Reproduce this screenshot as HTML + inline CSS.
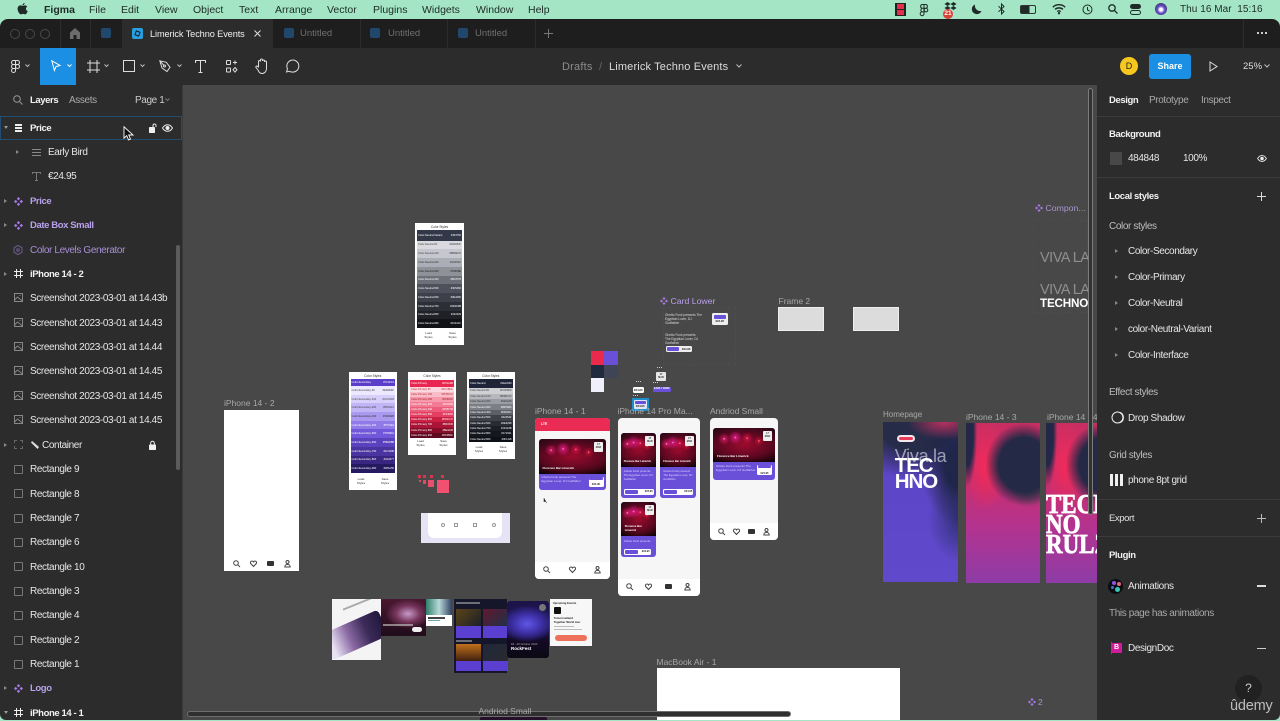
<!DOCTYPE html>
<html><head><meta charset="utf-8"><title>Figma</title>
<style>
*{box-sizing:border-box}
html,body{margin:0;padding:0;width:1280px;height:720px;overflow:hidden;background:#a3e5c4;font-family:"Liberation Sans",sans-serif}
.t{position:absolute;white-space:nowrap;line-height:14px;height:14px;font-size:10px;letter-spacing:-.38px;color:#e6e6e6;margin-top:1px}
.a{position:absolute}
svg.a{overflow:visible}
.m{color:#1f2b26;font-size:10.5px;top:2px;letter-spacing:0}
#win{position:absolute;left:0;top:0;width:1280px;height:720px;clip-path:inset(19px 0 0 0 round 8px 8px 6px 6px);background:#2c2c2c;filter:blur(.25px)}
.b{font-weight:bold;color:#f2f2f2;font-size:9.5px;letter-spacing:-.4px}
.p{color:#b9a0ec}
.g{color:#a9a9a9}
.tab{color:#6f6f6f;font-size:9.5px;letter-spacing:0}
.fi{position:absolute;width:10px;height:10px;background:#21486c;border-radius:2px;top:28px}
.box{position:absolute;left:14px;width:9px;height:9px;border:1px solid #777;border-radius:1px}
.sep{position:absolute;top:19px;width:1px;height:29px;background:#2c2c2c}
.div{position:absolute;left:1097px;width:183px;height:1px;background:#3c3c3c}
.arr{position:absolute;width:0;height:0;border-left:3px solid #888;border-top:2.5px solid transparent;border-bottom:2.5px solid transparent}
.lbl{color:#a8a8a8;font-size:8.5px;letter-spacing:0;margin-top:0}
.card{position:absolute;background:#fff}
.pal{position:absolute;display:flex;flex-direction:column}
.pal div{flex:1;display:flex;justify-content:space-between;align-items:center;font-size:2.6px;padding:0 1px;color:#fff;line-height:3px;overflow:hidden;white-space:nowrap}
.tt{position:absolute;left:0;right:0;text-align:center;font-size:3.2px;color:#333;white-space:nowrap}
.ls{position:absolute;font-size:3px;line-height:3.6px;color:#333;text-align:center;width:9px}
.ph{position:absolute;background:#f6f6f6;border-radius:4px;overflow:hidden}
.nav{position:absolute;left:0;right:0;bottom:0;background:#fff}
.ec{position:absolute;background:#6a4fd8;border-radius:3px;overflow:hidden}
.img{position:absolute;left:0;right:0;top:0;background:
radial-gradient(circle 1.2px at 18% 32%,#ffb0dc,transparent),
radial-gradient(circle 1.2px at 36% 28%,#ffa0e0,transparent),
radial-gradient(circle 1.2px at 55% 30%,#ff90b0,transparent),
radial-gradient(circle 1.2px at 74% 38%,#ff90a0,transparent),
radial-gradient(circle 6px at 18% 32%,rgba(240,30,120,.75),transparent),
radial-gradient(circle 7px at 36% 28%,rgba(240,30,150,.8),transparent),
radial-gradient(circle 6px at 55% 30%,rgba(240,20,80,.7),transparent),
radial-gradient(circle 5px at 74% 38%,rgba(240,20,60,.6),transparent),
radial-gradient(ellipse 75% 60% at 50% 50%,#9c0a2e 0,#5c0820 60%,transparent 100%),
linear-gradient(#2a0818,#1c0408 75%,#0c0206)}
.dt{position:absolute;background:#eee;border-radius:1px;width:7px;height:8px;font-size:2.4px;line-height:3px;color:#333;text-align:center;font-weight:bold;padding-top:1px}
.ttl{position:absolute;color:#fff;font-size:3px;font-weight:bold;white-space:nowrap}
.tx{position:absolute;color:#dcd6ff;font-size:3px;line-height:3.8px}
.pr{position:absolute;background:#fff;border-radius:1.5px;font-size:2.6px;font-weight:bold;color:#222;text-align:center}
.pr i{display:block;background:#6a4fd8;border-radius:1px;height:2.5px;margin:.7px}
.i{stroke:#444;fill:none;stroke-width:1}
</style></head><body>

<!-- menu bar -->
<svg class="a" style="left:17px;top:3px" width="11" height="12" viewBox="0 0 11 12"><path d="M7.6 0c.1 1-.8 2.3-2 2.3C5.500 1.200 6.500.1 7.600 0zM5.600 2.900c.6 0 1.300-.5 2.300-.5.900 0 1.800.4 2.300 1.200-1.900 1.100-1.500 3.700.5 4.500-.5 1.300-1.500 3.300-2.700 3.300-.8 0-1.100-.5-2-.5s-1.300.5-2 .5C2.500 11.400.6 8.200.6 5.900c0-2.300 1.500-3.500 2.800-3.500.9 0 1.600.5 2.200.5z" fill="#1f2b26"/></svg>
<div class="t m" style="left:44px;font-weight:bold">Figma</div>
<div class="t m" style="left:89px">File</div>
<div class="t m" style="left:121px">Edit</div>
<div class="t m" style="left:155px">View</div>
<div class="t m" style="left:193px">Object</div>
<div class="t m" style="left:239px">Text</div>
<div class="t m" style="left:275px">Arrange</div>
<div class="t m" style="left:327px">Vector</div>
<div class="t m" style="left:373px">Plugins</div>
<div class="t m" style="left:422px">Widgets</div>
<div class="t m" style="left:476px">Window</div>
<div class="t m" style="left:528px">Help</div>
<div class="a" style="left:895px;top:3px;width:11px;height:13px;background:#e0304a;border:1px solid #222;border-left-width:2px;border-right-width:2px"></div>
<div class="a" style="left:895px;top:9px;width:11px;height:1px;background:#222"></div>
<svg class="a" style="left:920px;top:4px" width="8" height="12" viewBox="0 0 8 12" fill="none" stroke="#1f2b26"><path d="M4 .5H2a2 2 0 000 3.800h2zM4 .5h2a2 2 0 010 3.800H4zM4 4.300H2a2 2 0 000 3.600h2zM6 4.300a1.800 1.800 0 100 3.600 1.800 1.800 0 000-3.600zM4 7.900H2a1.900 1.900 0 102 1.900z"/></svg>
<svg class="a" style="left:944px;top:2px" width="13" height="10" viewBox="0 0 13 10" fill="#1f2b26"><path d="M3.500 0L6.500 2 3.500 4 .5 2zM9.500 0l3 2-3 2-3-2zM3.500 4l3 2-3 2-3-2zM9.500 4l3 2-3 2-3-2z"/></svg>
<div class="a" style="left:943px;top:9px;width:10px;height:10px;border-radius:5px;background:#d8413a;color:#fff;font-size:6.5px;line-height:10px;text-align:center;font-weight:bold">21</div>
<svg class="a" style="left:971px;top:4px" width="11" height="11" viewBox="0 0 11 11"><path d="M4 .5A5 5 0 1010.500 7 5.500 5.500 0 014 .5z" fill="#1f2b26"/></svg>
<svg class="a" style="left:998px;top:3px" width="7" height="12" viewBox="0 0 7 12" fill="none" stroke="#1f2b26"><path d="M.5 3.200L6 8.500 3.500 11V1L6 3.500.5 8.800"/></svg>
<div class="a" style="left:1020px;top:5px;width:16px;height:9px;border:1px solid #333;border-radius:2px;background:linear-gradient(90deg,#1f2b26 60%,transparent 60%)"></div>
<svg class="a" style="left:1052px;top:4px" width="14" height="10" viewBox="0 0 14 10" fill="none" stroke="#1f2b26" stroke-width="1.400"><path d="M.8 3.200a9 9 0 0112.400 0M3 5.400a6 6 0 018 0M5.200 7.500a3 3 0 013.600 0"/><circle cx="7" cy="9.200" r=".5"/></svg>
<svg class="a" style="left:1082px;top:4px" width="11" height="11" viewBox="0 0 11 11" fill="none" stroke="#1f2b26"><circle cx="5.500" cy="5.500" r="4.500"/><path d="M5.500 3v3l2 1"/></svg>
<svg class="a" style="left:1108px;top:4px" width="10" height="10" viewBox="0 0 10 10" fill="none" stroke="#1f2b26" stroke-width="1.300"><circle cx="4" cy="4" r="3.200"/><path d="M6.400 6.400L9.500 9.500"/></svg>
<div class="a" style="left:1130px;top:4px;width:11px;height:5px;border-radius:3px;background:#1f2b26"></div>
<div class="a" style="left:1130px;top:10px;width:11px;height:5px;border-radius:3px;border:1px solid #1f2b26"></div>
<div class="a" style="left:1155px;top:3px;width:12px;height:12px;border-radius:6px;background:radial-gradient(circle at 50% 55%,#fff 0 15%,#6a50c8 40%,#33306a 80%)"></div>
<div class="t m" style="left:1180px;letter-spacing:.05px;font-size:10px">Thu 16 Mar&nbsp; 15:16</div>

<div id="win">
<!-- tab bar -->
<div class="a" style="left:0;top:19px;width:1280px;height:29px;background:#1e1e1e"></div>
<div class="a" style="left:122px;top:19px;width:151px;height:29px;background:#2c2c2c"></div>
<div class="a" style="left:9.500px;top:28.500px;width:10px;height:10px;border:1px solid #4a4a4a;border-radius:5px"></div>
<div class="a" style="left:24.500px;top:28.500px;width:10px;height:10px;border:1px solid #4a4a4a;border-radius:5px"></div>
<div class="a" style="left:40px;top:28.500px;width:10px;height:10px;border:1px solid #4a4a4a;border-radius:5px"></div>
<div class="sep" style="left:60px"></div><div class="sep" style="left:90px"></div><div class="sep" style="left:360px"></div><div class="sep" style="left:447px"></div><div class="sep" style="left:535px"></div><div class="sep" style="left:1243px"></div>
<svg class="a" style="left:70px;top:28px" width="10" height="11" viewBox="0 0 10 11"><path d="M5 0L0 4.500V11h3.500V7h3v4H10V4.500z" fill="#6c6c6c"/></svg>
<div class="fi" style="left:101px"></div>
<div class="fi" style="left:132px;width:11px;height:11px;background:#2a9fe0"></div>
<div class="a" style="left:135px;top:31px;width:5px;height:5px;border:1px solid #123;transform:rotate(20deg)"></div>
<div class="t" style="left:150px;top:26px;font-size:9.200px;color:#f0f0f0;letter-spacing:-.1px">Limerick Techno Events</div>
<svg class="a" style="left:254px;top:30px" width="7" height="7" viewBox="0 0 7 7" stroke="#ddd"><path d="M.5.500l6 6M6.500.500l-6 6"/></svg>
<div class="fi" style="left:284px"></div><div class="t tab" style="left:300px;top:26px">Untitled</div>
<div class="fi" style="left:370px"></div><div class="t tab" style="left:388px;top:26px">Untitled</div>
<div class="fi" style="left:458px"></div><div class="t tab" style="left:475px;top:26px">Untitled</div>
<svg class="a" style="left:544px;top:29px" width="9" height="9" viewBox="0 0 9 9" stroke="#777"><path d="M4.500 0v9M0 4.500h9"/></svg>
<div class="a" style="left:1257px;top:32px;width:2px;height:2px;background:#ccc;box-shadow:4px 0 #ccc,8px 0 #ccc"></div>

<!-- toolbar -->
<div class="a" style="left:0;top:48px;width:1280px;height:37px;background:#2c2c2c"></div>
<div class="a" style="left:40px;top:48px;width:36px;height:37px;background:#1a8fe3"></div>
<svg class="a" style="left:11px;top:60px" width="9" height="13" viewBox="0 0 9 13" fill="none" stroke="#ddd"><path d="M4.500.5H2.500a2 2 0 000 4h2zM4.500.5h2a2 2 0 010 4h-2zM4.500 4.500h-2a2 2 0 000 4h2zM6.500 4.500a2 2 0 100 4 2 2 0 000-4zM4.500 8.500h-2a2 2 0 102 2z"/></svg>
<svg class="a" style="left:25px;top:64px" width="5" height="4" fill="none" stroke="#bbb"><path d="M.5.500L2.500 2.500 4.500.5"/></svg>
<svg class="a" style="left:51px;top:60px" width="10" height="12" viewBox="0 0 10 12" fill="none" stroke="#fff"><path d="M.8.800L9 5.500 5 6.600 3.400 10.500z"/></svg>
<svg class="a" style="left:67px;top:64px" width="5" height="4" fill="none" stroke="#fff"><path d="M.5.500L2.500 2.500 4.500.5"/></svg>
<svg class="a" style="left:87px;top:60px" width="13" height="13" viewBox="0 0 13 13" fill="none" stroke="#ddd"><path d="M3 0v13M10 0v13M0 3h13M0 10h13"/></svg>
<svg class="a" style="left:104px;top:64px" width="5" height="4" fill="none" stroke="#bbb"><path d="M.5.500L2.500 2.500 4.500.5"/></svg>
<div class="a" style="left:123px;top:60px;width:12px;height:12px;border:1px solid #ddd"></div>
<svg class="a" style="left:140px;top:64px" width="5" height="4" fill="none" stroke="#bbb"><path d="M.5.500L2.500 2.500 4.500.5"/></svg>
<svg class="a" style="left:159px;top:60px" width="12" height="13" viewBox="0 0 12 13" fill="none" stroke="#ddd"><path d="M.8.800l6.500 1.500 3.700 5-3 4.200-5-3.500zM.8.800l4 4.500"/><circle cx="5.500" cy="6" r="1"/></svg>
<svg class="a" style="left:177px;top:64px" width="5" height="4" fill="none" stroke="#bbb"><path d="M.5.500L2.500 2.500 4.500.5"/></svg>
<svg class="a" style="left:195px;top:60px" width="11" height="13" viewBox="0 0 11 13" fill="none" stroke="#ddd"><path d="M.5 3V.5h10V3M5.500.5v12M3.500 12.500h4"/></svg>
<svg class="a" style="left:226px;top:60px" width="12" height="13" viewBox="0 0 12 13" fill="none" stroke="#ddd"><rect x=".5" y=".5" width="4" height="4" rx=".5"/><path d="M9 .5v4M7 2.500h4"/><rect x=".5" y="8" width="4" height="4" rx=".5"/><path d="M9 7.500l2 2.300-2 2.300-2-2.300z"/></svg>
<svg class="a" style="left:255px;top:58px" width="14" height="16" viewBox="0 0 14 16" fill="none" stroke="#ddd"><path d="M3.500 9V3.500a1 1 0 012 0V2a1 1 0 012 0v1a1 1 0 012 0v1a1 1 0 012 0v6.500c0 3-2 5-4.500 5S4 14 3 12L1 9.500c-.7-1 .8-2 1.500-1z"/></svg>
<svg class="a" style="left:285px;top:59px" width="14" height="14" viewBox="0 0 14 14" fill="none" stroke="#ddd"><path d="M1.500 13l1-3.200A6 6 0 117 13c-1 0-2-.3-2.500-.7z"/></svg>
<div class="t" style="left:562px;top:59px;font-size:11px;color:#8c8c8c;letter-spacing:.2px">Drafts</div>
<div class="t" style="left:599px;top:59px;font-size:11px;color:#666">/</div>
<div class="t" style="left:609px;top:59px;font-size:11px;color:#dcdcdc;letter-spacing:.15px">Limerick Techno Events</div>
<svg class="a" style="left:736px;top:64px" width="6" height="4" fill="none" stroke="#bbb"><path d="M.5.500L3 3 5.500.5"/></svg>
<div class="a" style="left:1120px;top:57px;width:18px;height:18px;border-radius:9px;background:#f6c81e;color:#222;font-size:9px;line-height:18px;text-align:center">D</div>
<div class="a" style="left:1149px;top:54px;width:42px;height:25px;border-radius:3px;background:#1a8fe3;color:#fff;font-size:9px;line-height:25px;text-align:center;font-weight:bold">Share</div>
<svg class="a" style="left:1209px;top:61px" width="9" height="11" viewBox="0 0 9 11" fill="none" stroke="#ddd"><path d="M1 1l7 4.500L1 10z"/></svg>
<div class="t" style="left:1243px;top:59px;font-size:9.500px;color:#ddd;letter-spacing:0">25%</div>
<svg class="a" style="left:1264px;top:64px" width="6" height="4" fill="none" stroke="#bbb"><path d="M.5.500L3 3 5.500.5"/></svg>

<!-- canvas -->
<div class="a" style="left:183px;top:85px;width:914px;height:635px;background:#484848;overflow:hidden">
</div>

<!-- left panel -->
<div class="a" style="left:0;top:85px;width:183px;height:635px;background:#2c2c2c"></div>
<div class="a" style="left:182px;top:85px;width:1px;height:635px;background:#3a3a3a"></div>
<svg class="a" style="left:13px;top:95px" width="10" height="10" viewBox="0 0 10 10" fill="none" stroke="#999"><circle cx="4" cy="4" r="3.300"/><path d="M6.500 6.500L9.500 9.500"/></svg>
<div class="t b" style="left:30px;top:93px">Layers</div>
<div class="t g" style="left:69px;top:93px">Assets</div>
<div class="t" style="left:135px;top:93px;color:#ccc">Page 1</div>
<svg class="a" style="left:165px;top:98px" width="5" height="4" fill="none" stroke="#777"><path d="M.5.500L2.500 2.500 4.500.5"/></svg>
<div class="a" style="left:0;top:116px;width:182px;height:24px;border:1px solid #214e72"></div>
<div class="a" style="left:176px;top:245px;width:4px;height:225px;background:#5c5c5c;border-radius:2px"></div>

<div class="arr" style="left:4px;top:126px;border-left:2.500px solid transparent;border-right:2.500px solid transparent;border-top:3px solid #999;border-bottom:0"></div>
<div class="a" style="left:15px;top:124px;width:7px;height:2px;background:#eee;box-shadow:0 3px #eee,0 6px #eee"></div>
<div class="t b" style="left:30px;top:121px">Price</div>
<svg class="a" style="left:149px;top:123px" width="8" height="10" viewBox="0 0 8 10"><rect y="4" width="6" height="6" rx=".8" fill="#eee"/><path d="M4 4V2.500a1.500 1.500 0 013 0V4" fill="none" stroke="#eee"/></svg>
<svg class="a" style="left:162px;top:124px" width="11" height="8" viewBox="0 0 11 8" fill="none" stroke="#eee"><path d="M.5 4C2 1.500 3.500.7 5.500.7S9 1.500 10.500 4C9 6.500 7.500 7.300 5.500 7.300S2 6.500.5 4z"/><circle cx="5.500" cy="4" r="1.500" fill="#eee"/></svg>

<div class="arr" style="left:16px;top:150px"></div>
<div class="a" style="left:32px;top:149px;width:9px;height:1px;background:#888;box-shadow:-0px 3px #888,0 6px #888"></div>
<div class="t" style="left:48px;top:145px">Early Bird</div>
<svg class="a" style="left:32px;top:172px" width="9" height="9" viewBox="0 0 9 9" fill="none" stroke="#777"><path d="M.5 2V.5h8V2M4.500.5v8M3 8.500h3"/></svg>
<div class="t" style="left:48px;top:169px">€24.95</div>

<div class="arr" style="left:4px;top:199px"></div>
<svg class="a" style="left:14px;top:197px" width="9" height="9" viewBox="0 0 9 9" fill="#a779ea"><path d="M4.500 0l1.700 1.700-1.700 1.700-1.700-1.700zM1.700 2.800l1.700 1.700-1.700 1.700L0 4.500zM7.300 2.800L9 4.500 7.300 6.200 5.600 4.500zM4.500 5.600l1.700 1.700L4.500 9 2.800 7.300z"/></svg>
<div class="t b p" style="left:30px;top:194px">Price</div>
<div class="arr" style="left:4px;top:223px"></div>
<svg class="a" style="left:14px;top:221px" width="9" height="9" viewBox="0 0 9 9" fill="#a779ea"><path d="M4.500 0l1.700 1.700-1.700 1.700-1.700-1.700zM1.700 2.800l1.700 1.700-1.700 1.700L0 4.500zM7.300 2.800L9 4.500 7.300 6.200 5.600 4.500zM4.500 5.600l1.700 1.700L4.500 9 2.800 7.300z"/></svg>
<div class="t b p" style="left:30px;top:218px">Date Box Small</div>
<svg class="a" style="left:13px;top:245px" width="10" height="10" viewBox="0 0 10 10" fill="none" stroke="#6e5c8e"><path d="M5 .5l4 2.200v4.600L5 9.500 1 7.300V2.700z"/><circle cx="5" cy="5" r="1.300"/></svg>
<div class="t p" style="left:30px;top:243px;color:#a98fd8">Color Levels Generator</div>
<div class="arr" style="left:4px;top:272px"></div>
<svg class="a" style="left:14px;top:269px" width="9" height="9" viewBox="0 0 9 9" fill="none" stroke="#eee"><path d="M2.500 0v9M6.500 0v9M0 2.500h9M0 6.500h9"/></svg>
<div class="t b" style="left:30px;top:267px">iPhone 14 - 2</div>

<svg class="a" style="left:14px;top:293px" width="9" height="9" viewBox="0 0 9 9" fill="none" stroke="#888"><rect x=".5" y=".5" width="8" height="8"/><path d="M.5 7l3-3 5 4M5.500 2.500h1"/></svg>
<div class="t" style="left:30px;top:291px">Screenshot 2023-03-01 at 14.43b</div>
<svg class="a" style="left:14px;top:318px" width="9" height="9" viewBox="0 0 9 9" fill="none" stroke="#888"><rect x=".5" y=".5" width="8" height="8"/><path d="M.5 7l3-3 5 4M5.500 2.500h1"/></svg>
<div class="t" style="left:30px;top:316px">Screenshot 2023-03-01 at 14.43</div>
<svg class="a" style="left:14px;top:342px" width="9" height="9" viewBox="0 0 9 9" fill="none" stroke="#888"><rect x=".5" y=".5" width="8" height="8"/><path d="M.5 7l3-3 5 4M5.500 2.500h1"/></svg>
<div class="t" style="left:30px;top:340px">Screenshot 2023-03-01 at 14.44</div>
<svg class="a" style="left:14px;top:366px" width="9" height="9" viewBox="0 0 9 9" fill="none" stroke="#888"><rect x=".5" y=".5" width="8" height="8"/><path d="M.5 7l3-3 5 4M5.500 2.500h1"/></svg>
<div class="t" style="left:30px;top:364px">Screenshot 2023-03-01 at 14.45</div>
<svg class="a" style="left:14px;top:391px" width="9" height="9" viewBox="0 0 9 9" fill="none" stroke="#888"><rect x=".5" y=".5" width="8" height="8"/><path d="M.5 7l3-3 5 4M5.500 2.500h1"/></svg>
<div class="t" style="left:30px;top:389px">Screenshot 2023-03-01 at 14.45</div>
<svg class="a" style="left:14px;top:415px" width="9" height="9" viewBox="0 0 9 9" fill="none" stroke="#888"><rect x=".5" y=".5" width="8" height="8"/><path d="M.5 7l3-3 5 4M5.500 2.500h1"/></svg>
<div class="t" style="left:30px;top:413px">Screenshot 2023-03-01 at 14.45</div>

<div class="arr" style="left:4px;top:443px"></div>
<div class="a" style="left:14px;top:440px;width:9px;height:9px;border:1px dashed #666"></div>
<svg class="a" style="left:31px;top:441px" width="8" height="8" viewBox="0 0 8 8"><path d="M1 0l7 6-1.500 2L0 1.500z" fill="#dedede"/></svg>
<div class="t" style="left:42px;top:438px">Container</div>
<svg class="a" style="left:149px;top:441px" width="7" height="9" viewBox="0 0 7 9"><rect y="3.500" width="7" height="5.500" rx=".8" fill="#f0f0f0"/><path d="M1.700 3.500V2a1.800 1.800 0 013.600 0v1.500" fill="none" stroke="#f0f0f0"/></svg>

<div class="box" style="top:465px"></div><div class="t" style="left:30px;top:462px">Rectangle 9</div>
<div class="box" style="top:489px"></div><div class="t" style="left:30px;top:487px">Rectangle 8</div>
<div class="box" style="top:514px"></div><div class="t" style="left:30px;top:511px">Rectangle 7</div>
<div class="box" style="top:538px"></div><div class="t" style="left:30px;top:535px">Rectangle 6</div>
<div class="box" style="top:562px"></div><div class="t" style="left:30px;top:560px">Rectangle 10</div>
<div class="box" style="top:587px"></div><div class="t" style="left:30px;top:584px">Rectangle 3</div>
<div class="box" style="top:611px"></div><div class="t" style="left:30px;top:608px">Rectangle 4</div>
<div class="box" style="top:636px"></div><div class="t" style="left:30px;top:633px">Rectangle 2</div>
<div class="box" style="top:660px"></div><div class="t" style="left:30px;top:657px">Rectangle 1</div>
<div class="arr" style="left:4px;top:686px"></div>
<svg class="a" style="left:14px;top:684px" width="9" height="9" viewBox="0 0 9 9" fill="#a779ea"><path d="M4.500 0l1.700 1.700-1.700 1.700-1.700-1.700zM1.700 2.800l1.700 1.700-1.700 1.700L0 4.500zM7.300 2.800L9 4.500 7.300 6.200 5.600 4.500zM4.500 5.600l1.700 1.700L4.500 9 2.800 7.300z"/></svg>
<div class="t b p" style="left:30px;top:681px">Logo</div>
<div class="arr" style="left:4px;top:711px;border-left:2.500px solid transparent;border-right:2.500px solid transparent;border-top:3px solid #999;border-bottom:0"></div>
<svg class="a" style="left:14px;top:708px" width="9" height="9" viewBox="0 0 9 9" fill="none" stroke="#eee"><path d="M2.500 0v9M6.500 0v9M0 2.500h9M0 6.500h9"/></svg>
<div class="t b" style="left:30px;top:706px">iPhone 14 - 1</div>

<!-- cursor -->
<svg class="a" style="left:123px;top:126px" width="11" height="15" viewBox="0 0 11 15"><path d="M1 .8v11.400l2.700-2.500 1.800 4.200 2-.8-1.800-4.100H10z" fill="#111" stroke="#fff" stroke-width=".9"/></svg>

<!-- canvas contents -->
<div class="t lbl" style="left:224px;top:396px">iPhone 14 - 2</div>
<div class="a" style="left:224px;top:410px;width:75px;height:161px;background:#fff"></div>
<svg class="a i" style="left:233px;top:560px" width="7" height="7" viewBox="0 0 7 7"><circle cx="3" cy="3" r="2.300"/><path d="M4.700 4.700L7 7"/></svg>
<svg class="a i" style="left:250px;top:560px" width="7" height="7" viewBox="0 0 7 7"><path d="M3.500 6.500L.6 3.400C-.4 1.500 2.400 0 3.500 2 4.600 0 7.400 1.500 6.400 3.400z"/></svg>
<div class="a" style="left:267px;top:561px;width:7px;height:5px;background:#333;border-radius:1px"></div>
<svg class="a i" style="left:284px;top:560px" width="7" height="7" viewBox="0 0 7 7"><circle cx="3.500" cy="2" r="1.500"/><path d="M.8 7c0-3.500 5.400-3.500 5.400 0z"/></svg>

<!-- top color card -->
<div class="card" style="left:415px;top:223px;width:49px;height:122px">
<div class="tt" style="top:2px">Color Styles</div>
<div class="pal" style="left:2px;top:7px;width:45px;height:98px">
<div style="background:#333848;flex:1.2"><span>Color-Neutral-Variant</span><span>#404752</span></div>
<div style="background:#d9d9df;color:#444"><span>Color-Neutral-50</span><span>#D4D9DF</span></div>
<div style="background:#c6c7ce;color:#444"><span>Color-Neutral-100</span><span>#BBBEC5</span></div>
<div style="background:#acaeb7;color:#333"><span>Color-Neutral-200</span><span>#A0A5AF</span></div>
<div style="background:#8f9199;color:#222"><span>Color-Neutral-300</span><span>#7E828E</span></div>
<div style="background:#6e7079"><span>Color-Neutral-400</span><span>#6D7078</span></div>
<div style="background:#4e515c"><span>Color-Neutral-500</span><span>#4F5460</span></div>
<div style="background:#3d404b"><span>Color-Neutral-600</span><span>#3E4250</span></div>
<div style="background:#2c2f38"><span>Color-Neutral-700</span><span>#2D303B</span></div>
<div style="background:#1f2127"><span>Color-Neutral-800</span><span>#222329</span></div>
<div style="background:#121317"><span>Color-Neutral-900</span><span>#161A1F</span></div>
</div>
<div class="ls" style="left:9px;top:109px">Load Styles</div><div class="ls" style="left:33px;top:109px">Save Styles</div>
</div>

<!-- purple color card -->
<div class="card" style="left:348.500px;top:372px;width:48.500px;height:118px">
<div class="tt" style="top:1.500px">Color Styles</div>
<div class="pal" style="left:2px;top:7px;width:44.500px;height:94px">
<div style="background:#5a3ec9;flex:.8"><span>Color-Secondary</span><span>#7C4FF4</span></div>
<div style="background:#ece8fd;color:#444"><span>Color-Secondary-50</span><span>#EFEBFF</span></div>
<div style="background:#d8d0fb;color:#444"><span>Color-Secondary-100</span><span>#CCC0F8</span></div>
<div style="background:#c1b5f5;color:#444"><span>Color-Secondary-200</span><span>#B5A9F1</span></div>
<div style="background:#a999ef;color:#333"><span>Color-Secondary-300</span><span>#9D90EB</span></div>
<div style="background:#8f7ae7"><span>Color-Secondary-400</span><span>#8770E4</span></div>
<div style="background:#7158da"><span>Color-Secondary-500</span><span>#7050DA</span></div>
<div style="background:#5a42bf"><span>Color-Secondary-600</span><span>#5B3DB8</span></div>
<div style="background:#4a349f"><span>Color-Secondary-700</span><span>#4C3498</span></div>
<div style="background:#382680"><span>Color-Secondary-800</span><span>#3A2677</span></div>
<div style="background:#251a60"><span>Color-Secondary-900</span><span>#281A50</span></div>
</div>
<div class="ls" style="left:8px;top:106px">Load Styles</div><div class="ls" style="left:32px;top:106px">Save Styles</div>
</div>

<!-- red color card -->
<div class="card" style="left:408px;top:372px;width:48px;height:83px">
<div class="tt" style="top:1.500px">Color Styles</div>
<div class="pal" style="left:2px;top:8px;width:44px;height:57.700px">
<div style="background:#e8264f;flex:1.3"><span>Color-Primary</span><span>#F51A4B</span></div>
<div style="background:#fcd7df;color:#a33"><span>Color-Primary 50</span><span>#FFCBCF</span></div>
<div style="background:#f9bcc8;color:#a33"><span>Color-Primary 100</span><span>#FFBCC2</span></div>
<div style="background:#f79aad;color:#922"><span>Color-Primary 200</span><span>#FF9FAF</span></div>
<div style="background:#f27a93"><span>Color-Primary 300</span><span>#FF8299</span></div>
<div style="background:#ec5c7a"><span>Color-Primary 400</span><span>#F55F7B</span></div>
<div style="background:#e33f62"><span>Color-Primary 500</span><span>#F44060</span></div>
<div style="background:#cc1f44"><span>Color-Primary 600</span><span>#D61C47</span></div>
<div style="background:#aa1537"><span>Color-Primary 700</span><span>#B01536</span></div>
<div style="background:#870e2b"><span>Color-Primary 800</span><span>#8E1028</span></div>
<div style="background:#5f0a1e"><span>Color-Primary 900</span><span>#6C0B1F</span></div>
</div>
<div class="ls" style="left:8px;top:68px">Load Styles</div><div class="ls" style="left:31px;top:68px">Save Styles</div>
</div>

<!-- neutral color card -->
<div class="card" style="left:466.500px;top:372px;width:48.500px;height:86.500px">
<div class="tt" style="top:1.500px">Color Styles</div>
<div class="pal" style="left:2.500px;top:7px;width:43.500px;height:63px">
<div style="background:#1f2438;flex:1.700"><span>Color-Neutral</span><span>#1E2A3D</span></div>
<div style="background:#cfd0d4;color:#444"><span>Color-Neutral 50</span><span>#D3D6D8</span></div>
<div style="background:#b6b8bd;color:#444"><span>Color-Neutral 100</span><span>#B9BCC2</span></div>
<div style="background:#9a9da3;color:#333"><span>Color-Neutral 200</span><span>#9FA2A8</span></div>
<div style="background:#7d7f86"><span>Color-Neutral 300</span><span>#807E8A</span></div>
<div style="background:#5e6068"><span>Color-Neutral 400</span><span>#60646C</span></div>
<div style="background:#3f4149"><span>Color-Neutral 500</span><span>#42464F</span></div>
<div style="background:#2a2c35"><span>Color-Neutral 600</span><span>#2E3038</span></div>
<div style="background:#1d1f28"><span>Color-Neutral 700</span><span>#1F222B</span></div>
<div style="background:#15171f"><span>Color-Neutral 800</span><span>#171921</span></div>
<div style="background:#0e1017"><span>Color-Neutral 900</span><span>#0F1118</span></div>
</div>
<div class="ls" style="left:8px;top:74px">Load Styles</div><div class="ls" style="left:32px;top:74px">Save Styles</div>
</div>

<!-- red squares -->
<div class="a" style="left:418px;top:475px;width:2.500px;height:2.500px;background:#d8354f"></div>
<div class="a" style="left:423px;top:475px;width:2.500px;height:2.500px;background:#d8354f"></div>
<div class="a" style="left:429.500px;top:475px;width:3px;height:2.500px;background:#d8354f"></div>
<div class="a" style="left:441px;top:475px;width:3px;height:2.500px;background:#d8354f"></div>
<div class="a" style="left:418.500px;top:480px;width:2px;height:2px;background:#e04a64"></div>
<div class="a" style="left:422.500px;top:480px;width:3.500px;height:3.500px;background:#e04a64"></div>
<div class="a" style="left:428px;top:480px;width:6px;height:6.500px;background:#e84f6c"></div>
<div class="a" style="left:436.500px;top:480px;width:12.500px;height:12.500px;background:#f25070"></div>

<!-- nav component -->
<div class="a" style="left:421px;top:513px;width:89px;height:30px;background:#e6e3f5;overflow:hidden">
<div class="a" style="left:7px;top:-6px;width:74px;height:31px;background:#fff;border-radius:6px"></div>
<div class="a" style="left:19.500px;top:10px;width:4px;height:4px;border:.7px solid #999;border-radius:2px"></div>
<div class="a" style="left:33px;top:10px;width:4px;height:4px;border:.7px solid #999"></div>
<div class="a" style="left:52px;top:10px;width:4px;height:4px;border:.7px solid #999"></div>
<div class="a" style="left:71px;top:10px;width:4px;height:4px;border:.7px solid #999;border-radius:2px"></div>
</div>

<!-- swatches -->
<div class="a" style="left:590.500px;top:351px;width:13.500px;height:13.500px;background:#e92a4d"></div>
<div class="a" style="left:604px;top:351px;width:13.500px;height:13.500px;background:#6a4fd8"></div>
<div class="a" style="left:590.500px;top:364.500px;width:13.500px;height:13.500px;background:#202a3e"></div>
<div class="a" style="left:604px;top:364.500px;width:13.500px;height:13.500px;background:#3f4556"></div>
<div class="a" style="left:590.500px;top:378px;width:13.500px;height:13.500px;background:#f0f0fa"></div>

<!-- small comps -->
<div class="a" style="left:656px;top:371.500px;width:10px;height:9.500px;background:#e6e6e6;border-radius:1px;font-size:2.500px;line-height:3px;text-align:center;color:#333;padding-top:1.500px;font-weight:bold">17<br>MAR</div>
<div class="a" style="left:652.500px;top:387px;width:18.500px;height:4.700px;background:#6a4fd8;border-radius:1px;font-size:2.600px;line-height:4.700px;text-align:center;color:#fff;font-weight:bold">EARLY BIRD</div>
<div class="a" style="left:632.500px;top:386.500px;width:11.500px;height:6px;background:#fff;border-radius:1.500px;font-size:2.800px;line-height:6px;text-align:center;color:#222;font-weight:bold">€24.95</div>
<div class="a" style="left:632px;top:397.500px;width:16.500px;height:13px;background:#1d8fc9"></div>
<div class="a" style="left:634px;top:399.500px;width:12.500px;height:9px;background:#dfe6f5;border-radius:1px;font-size:2.800px;text-align:center;color:#222;font-weight:bold;line-height:13px"><div class="a" style="left:1px;top:1px;width:10.500px;height:3px;background:#6a4fd8;border-radius:1px"></div>€24.95</div>
<div class="a" style="left:636px;top:381px;width:1px;height:1px;background:#ccc;box-shadow:2px 0 #ccc,4px 0 #ccc"></div>
<div class="a" style="left:657px;top:367px;width:1px;height:1px;background:#ccc;box-shadow:2px 0 #ccc,4px 0 #ccc"></div>
<div class="a" style="left:653px;top:382px;width:1px;height:1px;background:#ccc;box-shadow:2px 0 #ccc,4px 0 #ccc"></div>
<div class="a" style="left:633px;top:395px;width:1px;height:1px;background:#ccc;box-shadow:2px 0 #ccc,4px 0 #ccc"></div>

<!-- Card Lower -->
<svg class="a" style="left:660px;top:297px" width="8" height="8" viewBox="0 0 9 9" fill="#a779ea"><path d="M4.500 0l1.700 1.700-1.700 1.700-1.700-1.700zM1.700 2.800l1.700 1.700-1.700 1.700L0 4.500zM7.300 2.800L9 4.500 7.300 6.200 5.600 4.500zM4.500 5.600l1.700 1.700L4.500 9 2.800 7.300z"/></svg>
<div class="t" style="left:670.500px;top:293px;font-size:8.700px;color:#b9a0ec;letter-spacing:0">Card Lower</div>
<div class="a" style="left:662.500px;top:307px;width:73px;height:58px;border:1px dashed #55506a;opacity:.4"></div>
<div class="a" style="left:665px;top:313px;width:40px;font-size:3.200px;line-height:4px;color:#ddd">Ghetto Funk presents The Egyptian Lover, DJ Godfather</div>
<div class="a" style="left:712px;top:313px;width:15.500px;height:11.500px;background:#eee;border-radius:1.500px;font-size:2.800px;font-weight:bold;color:#222;text-align:center;padding-top:5.500px"><div class="a" style="left:1.500px;top:1.500px;width:12.500px;height:4px;background:#6a4fd8;border-radius:1px"></div>€24.95</div>
<div class="a" style="left:665px;top:333px;width:36px;font-size:3.200px;line-height:4px;color:#ddd">Ghetto Funk presents The Egyptian Lover, DJ Godfather</div>
<div class="a" style="left:665.500px;top:346px;width:26px;height:6px;background:#eee;border-radius:1.500px;font-size:2.800px;font-weight:bold;color:#222;text-align:right;line-height:6px;padding-right:1px"><div class="a" style="left:1px;top:1px;width:12px;height:4px;background:#6a4fd8;border-radius:1px"></div>€24.95</div>

<div class="t lbl" style="left:778.500px;top:294px">Frame 2</div>
<div class="a" style="left:778px;top:307px;width:46px;height:24px;background:#dcdcdc;border:1px solid #eee"></div>
<div class="a" style="left:852.500px;top:307px;width:46px;height:24px;background:#dcdcdc;border:1px solid #eee"></div>

<!-- Phones -->
<div class="t lbl" style="left:535px;top:404px">iPhone 14 - 1</div>
<div class="ph" style="left:535px;top:418px;width:74.500px;height:160.500px">
<div class="a" style="left:0;top:0;width:100%;height:12.500px;background:#ea2c54;color:#fff;font-size:3.500px;line-height:12.500px;padding-left:6px;font-weight:bold">LTE</div>
<div class="nav" style="height:17px"></div>
</div>
<div class="ec" style="left:538.500px;top:439px;width:67.500px;height:51px">
<div class="img" style="height:34.500px"></div>
<div class="dt" style="right:3px;top:3px;left:auto;width:9px;height:9.500px">17<br>MAR</div>
<div class="ttl" style="left:4px;top:27px">Florence Bar Limerick</div>
<div class="tx" style="left:3px;top:37px;width:44px">Ghetto Funk presents The Egyptian Lover, DJ Godfather</div>
<div class="pr" style="left:50px;top:37.500px;width:15px;height:10.500px;line-height:3px"><i></i><br>€24.95</div>
</div>
<svg class="a i" style="left:543px;top:566px" width="7" height="7" viewBox="0 0 7 7"><circle cx="3" cy="3" r="2.300"/><path d="M4.700 4.700L7 7"/></svg>
<svg class="a i" style="left:569px;top:566px" width="7" height="7" viewBox="0 0 7 7"><path d="M3.500 6.500L.6 3.400C-.4 1.500 2.400 0 3.500 2 4.600 0 7.400 1.500 6.400 3.400z"/></svg>
<svg class="a i" style="left:594px;top:566px" width="7" height="7" viewBox="0 0 7 7"><circle cx="3.500" cy="2" r="1.500"/><path d="M.8 7c0-3.500 5.400-3.500 5.400 0z"/></svg>
<svg class="a" style="left:544px;top:498px" width="4" height="5" viewBox="0 0 4 5"><path d="M0 0v4l1-1 2 2" fill="#222" stroke="#222" stroke-width=".5"/></svg>

<div class="t lbl" style="left:617.500px;top:404px;color:#a8a8a8">iPhone 14 Pro Ma...</div>
<div class="ph" style="left:617.500px;top:418px;width:82px;height:177.500px"><div class="nav" style="height:17px"></div></div>
<div class="ec" style="left:620.700px;top:433.300px;width:35.700px;height:65px">
<div class="img" style="height:33.500px"></div><div class="dt" style="right:2px;top:3px;left:auto;width:9px;height:9.500px">17<br>MAR</div>
<div class="ttl" style="left:3px;top:27px;font-size:2.600px">Florence Bar Limerick</div>
<div class="tx" style="left:3px;top:37px;width:30px;font-size:2.800px">Ghetto Funk presents The Egyptian Lover, DJ Godfather</div>
<div class="pr" style="left:3px;top:56px;width:30px;height:6px;line-height:6px;text-align:right;padding-right:1px"><div class="a" style="left:1px;top:1px;width:13px;height:4px;background:#6a4fd8;border-radius:1px"></div>€24.95</div>
</div>
<div class="ec" style="left:660.300px;top:433.300px;width:35.700px;height:65px">
<div class="img" style="height:33.500px"></div><div class="dt" style="right:2px;top:3px;left:auto;width:9px;height:9.500px">17<br>MAR</div>
<div class="ttl" style="left:3px;top:27px;font-size:2.600px">Florence Bar Limerick</div>
<div class="tx" style="left:3px;top:37px;width:30px;font-size:2.800px">Ghetto Funk presents The Egyptian Lover, DJ Godfather</div>
<div class="pr" style="left:3px;top:56px;width:30px;height:6px;line-height:6px;text-align:right;padding-right:1px"><div class="a" style="left:1px;top:1px;width:13px;height:4px;background:#6a4fd8;border-radius:1px"></div>€24.95</div>
</div>
<div class="ec" style="left:620.700px;top:502.300px;width:35.700px;height:55px">
<div class="img" style="height:34px"></div><div class="dt" style="right:2px;top:3px;left:auto;width:9px;height:9.500px">17<br>MAR</div>
<div class="ttl" style="left:4px;top:22px;font-size:2.800px;line-height:4px">Florence Bar<br>Limerick</div>
<div class="tx" style="left:3px;top:38px;width:30px;font-size:2.800px">Ghetto Funk presents</div>
<div class="pr" style="left:3px;top:46.500px;width:27px;height:6px;line-height:6px;text-align:right;padding-right:1px"><div class="a" style="left:1px;top:1px;width:13px;height:4px;background:#6a4fd8;border-radius:1px"></div>€24.95</div>
</div>
<svg class="a i" style="left:626px;top:583px" width="7" height="7" viewBox="0 0 7 7"><circle cx="3" cy="3" r="2.300"/><path d="M4.700 4.700L7 7"/></svg>
<svg class="a i" style="left:645px;top:583px" width="7" height="7" viewBox="0 0 7 7"><path d="M3.500 6.500L.6 3.400C-.4 1.500 2.400 0 3.500 2 4.600 0 7.400 1.500 6.400 3.400z"/></svg>
<div class="a" style="left:665px;top:584px;width:7px;height:5px;background:#333;border-radius:1px"></div>
<svg class="a i" style="left:684px;top:583px" width="7" height="7" viewBox="0 0 7 7"><circle cx="3.500" cy="2" r="1.500"/><path d="M.8 7c0-3.500 5.400-3.500 5.400 0z"/></svg>

<div class="t lbl" style="left:710px;top:404px">Andriod Small</div>
<div class="ph" style="left:709.700px;top:418px;width:68.600px;height:121.700px"><div class="nav" style="height:17px"></div></div>
<div class="ec" style="left:713px;top:428.300px;width:62px;height:51.700px">
<div class="img" style="height:34px"></div><div class="dt" style="right:3px;top:3px;left:auto;width:9px;height:9.500px">17<br>MAR</div>
<div class="ttl" style="left:4px;top:26px">Florence Bar Limerick</div>
<div class="tx" style="left:3px;top:37px;width:40px">Ghetto Funk presents The Egyptian Lover, DJ Godfather</div>
<div class="pr" style="left:44px;top:36.500px;width:15px;height:10.500px;line-height:3px"><i></i><br>€24.95</div>
</div>
<svg class="a i" style="left:718px;top:528px" width="7" height="7" viewBox="0 0 7 7"><circle cx="3" cy="3" r="2.300"/><path d="M4.700 4.700L7 7"/></svg>
<svg class="a i" style="left:733px;top:528px" width="7" height="7" viewBox="0 0 7 7"><path d="M3.500 6.500L.6 3.400C-.4 1.500 2.400 0 3.500 2 4.600 0 7.400 1.500 6.400 3.400z"/></svg>
<div class="a" style="left:748px;top:529px;width:7px;height:5px;background:#333;border-radius:1px"></div>
<svg class="a i" style="left:763px;top:528px" width="7" height="7" viewBox="0 0 7 7"><circle cx="3.500" cy="2" r="1.500"/><path d="M.8 7c0-3.500 5.400-3.500 5.400 0z"/></svg>

<!-- Homepage / gradients -->
<div class="t lbl" style="left:883px;top:408px;font-size:8px;letter-spacing:0">Homepage</div>
<div class="a" style="left:883.300px;top:421.700px;width:74.400px;height:160px;overflow:hidden;background:
radial-gradient(ellipse 50% 11% at 82% 0,#b8305f 0,transparent 100%),
radial-gradient(ellipse 50% 36% at 100% 28%,#20264a 0 35%,transparent 100%),
radial-gradient(ellipse 100% 36% at 45% 0,#262b48 0 50%,transparent 100%),
radial-gradient(ellipse 45% 28% at 105% 60%,#2d2e6e 0,transparent 100%),
linear-gradient(#5c44c8,#6049ca)">
<div class="a" style="left:14px;top:13px;width:18px;height:7px;background:#e93a5c;border:2px solid #f4e8ec;border-radius:4px"></div>
<div class="t" style="left:11.500px;top:23px;font-size:18px;line-height:20px;height:20px;color:rgba(255,255,255,.55);letter-spacing:-.3px">Viva la</div>
<div class="a" style="left:11.500px;top:36.500px;font-size:20.500px;line-height:15.500px;font-weight:bold;color:#fff;letter-spacing:-1.100px">TEC<br>HNO</div>
</div>
<div class="t lbl" style="left:966px;top:410px">iPhone 14 - 3</div>
<div class="a" style="left:965.700px;top:422.700px;width:74.300px;height:160.600px;background:
radial-gradient(ellipse 52% 26% at 78% 26%,#242945 0 65%,transparent 100%),
radial-gradient(ellipse 28% 13% at 88% 40%,#45454c 0,transparent 100%),
radial-gradient(ellipse 13% 34% at 2% 6%,#232848 0 60%,transparent 100%),
radial-gradient(ellipse 30% 28% at 27% 27%,#f42a58 0,transparent 100%),
linear-gradient(#c92e62 0,#c62f72 40%,#b3338f 65%,#8e3ca8 100%)"></div>
<div class="t lbl" style="left:1047px;top:410px">iPhone 14 - 4</div>
<div class="a" style="left:1046.300px;top:422.700px;width:51px;height:160.600px;overflow:hidden">
<div class="a" style="left:0;top:0;width:74.300px;height:160.600px;background:
radial-gradient(ellipse 52% 26% at 78% 26%,#242945 0 65%,transparent 100%),
radial-gradient(ellipse 13% 34% at 2% 6%,#232848 0 60%,transparent 100%),
radial-gradient(ellipse 30% 28% at 27% 27%,#f42a58 0,transparent 100%),
linear-gradient(#c92e62 0,#c62f72 40%,#b3338f 65%,#8e3ca8 100%)"></div>
<div class="a" style="left:0;top:71px;font-family:'Liberation Serif',serif;font-weight:bold;font-size:27px;line-height:20px;color:#fff;transform:scaleX(.85);transform-origin:0 0;-webkit-text-stroke:.8px #fff;white-space:nowrap">TECH<br>NO<br>RULZ</div>
</div>

<!-- Component panel top right -->
<svg class="a" style="left:1035px;top:204px" width="8" height="8" viewBox="0 0 9 9" fill="#a779ea"><path d="M4.500 0l1.700 1.700-1.700 1.700-1.700-1.700zM1.700 2.800l1.700 1.700-1.700 1.700L0 4.500zM7.300 2.800L9 4.500 7.300 6.200 5.600 4.500zM4.500 5.600l1.700 1.700L4.500 9 2.800 7.300z"/></svg>
<div class="t" style="left:1045.500px;top:200px;font-size:8.700px;color:#a996d0;letter-spacing:0">Compon...</div>
<div class="a" style="left:1033px;top:220px;width:55px;height:93px;border:1px dashed #524e62;opacity:.4"></div>
<div class="a" style="left:1040px;top:240px;width:49px;height:75px;overflow:hidden">
<div class="t" style="left:0;top:9px;font-size:14.500px;line-height:16px;height:16px;color:#8f8f8f;letter-spacing:-.5px">VIVA LA</div>
<div class="t" style="left:0;top:41px;font-size:14.500px;line-height:16px;height:16px;color:#8f8f8f;letter-spacing:-.5px">VIVA LA</div>
<div class="t" style="left:0;top:55.500px;font-size:11.700px;line-height:14px;color:#fff;font-weight:bold;letter-spacing:-.2px">TECHNO</div>
</div>

<!-- screens row -->
<div class="a" style="left:332.300px;top:599.300px;width:48.700px;height:60.700px;background:#f4f4f4;overflow:hidden">
<div class="a" style="left:-8px;top:22px;width:62px;height:28px;background:linear-gradient(90deg,#e9e3f3 10%,#8b6aa4 40%,#3c2b5a 70%,#21183a);border-radius:4px;transform:rotate(-24deg)"></div>
<div class="a" style="left:10px;top:4px;width:30px;height:2px;background:#aaa;transform:rotate(-22deg)"></div>
</div>
<div class="a" style="left:381px;top:599.300px;width:44.700px;height:36.700px;background:radial-gradient(ellipse 50% 40% at 60% 40%,#c79ac8,#75345a 55%,transparent 100%),linear-gradient(#4a1830,#1f0c1a)">
<div class="a" style="left:2px;top:25px;width:30px;height:2px;background:#ccc;opacity:.6"></div>
<div class="a" style="left:31px;top:28px;width:10px;height:5px;background:#eee;border-radius:3px"></div>
</div>
<div class="a" style="left:425.700px;top:599.300px;width:26.300px;height:26.400px;background:#fff;overflow:hidden">
<div class="a" style="left:0;top:0;width:100%;height:16px;background:linear-gradient(90deg,#2d7f6a,#b8d8d8 50%,#304060)"></div>
<div class="a" style="left:2px;top:18px;width:17px;height:1.500px;background:#444"></div>
<div class="a" style="left:2px;top:21px;width:12px;height:1px;background:#6aa"></div>
</div>
<div class="a" style="left:452.700px;top:599.300px;width:54.300px;height:74px;background:#15162a;border-left:1px solid #4a4a70">
<div class="a" style="left:2px;top:10px;width:25px;height:17px;background:linear-gradient(135deg,#5a4418,#1d2026)"></div>
<div class="a" style="left:29px;top:10px;width:25px;height:17px;background:linear-gradient(135deg,#601830,#203048)"></div>
<div class="a" style="left:2px;top:27px;width:25px;height:12px;background:#5b3fd0"></div>
<div class="a" style="left:29px;top:27px;width:25px;height:12px;background:#5b3fd0"></div>
<div class="a" style="left:2px;top:45px;width:25px;height:17px;background:linear-gradient(#c2701a,#402010)"></div>
<div class="a" style="left:29px;top:45px;width:25px;height:17px;background:linear-gradient(135deg,#20283a,#2a2a30)"></div>
<div class="a" style="left:2px;top:62px;width:25px;height:10px;background:#5b3fd0"></div>
<div class="a" style="left:29px;top:62px;width:25px;height:10px;background:#5b3fd0"></div>
<div class="a" style="left:2px;top:3px;width:24px;height:1.500px;background:#aaa;opacity:.6"></div>
<div class="a" style="left:2px;top:41px;width:16px;height:1.500px;background:#aaa;opacity:.6"></div>
</div>
<div class="a" style="left:507px;top:600.500px;width:41.500px;height:57px;border-radius:3px;background:radial-gradient(ellipse 65% 32% at 48% 40%,#5e57e8 0,#3c2da0 55%,transparent 100%),linear-gradient(#1b1346,#1f1a5c 45%,#120a24 70%,#0c0914)">
<div class="a" style="left:32px;top:3px;width:7px;height:7px;border-radius:4px;background:#777"></div>
<div class="t" style="left:4px;top:40px;font-size:2.800px;color:#aaa;line-height:4px;height:4px;letter-spacing:0">18 - 20 October 2023</div>
<div class="t" style="left:4px;top:44px;font-size:4.500px;color:#fff;font-weight:bold;line-height:6px;height:6px;letter-spacing:0">RockFest</div>
</div>
<div class="a" style="left:549.700px;top:599.300px;width:42px;height:46.400px;background:#f7f7f7;overflow:hidden">
<div class="t" style="left:3px;top:.5px;font-size:2.800px;color:#222;line-height:4px;height:4px;font-weight:bold;letter-spacing:0">Upcoming Events</div>
<div class="a" style="left:4px;top:8px;width:7px;height:7px;background:#111;border-radius:1px"></div>
<div class="a" style="left:4px;top:18px;width:30px;font-size:2.800px;line-height:3.500px;color:#222;font-weight:bold">Tomorrowland Together World tour</div>
<div class="a" style="left:4px;top:27px;width:20px;height:1px;background:#bbb"></div>
<div class="a" style="left:4px;top:30px;width:28px;height:1px;background:#bbb"></div>
<div class="a" style="left:5px;top:36px;width:32px;height:5.500px;border-radius:3px;background:#ee6f5a"></div>
</div>

<!-- macbook -->
<div class="t lbl" style="left:656.500px;top:655px">MacBook Air - 1</div>
<div class="a" style="left:656.500px;top:668px;width:243.500px;height:52px;background:#fff"></div>

<div class="a" style="left:480px;top:716px;width:67px;height:4px;background:#26102c;border-radius:3px 3px 0 0"></div>

<!-- scrollbars -->
<div class="a" style="left:187px;top:711px;width:604px;height:6px;background:#2f2f2f;border:1px solid #6e6e6e;border-radius:3px"></div>
<div class="a" style="left:1087.500px;top:88px;width:5px;height:427px;border:1px solid #7c7c7c;border-radius:3px;background:#323232"></div>
<div class="t lbl" style="left:478.500px;top:704px">Andriod Small</div>
<svg class="a" style="left:1028px;top:698px" width="8" height="8" viewBox="0 0 9 9" fill="#a779ea"><path d="M4.500 0l1.700 1.700-1.700 1.700-1.700-1.700zM1.700 2.800l1.700 1.700-1.700 1.700L0 4.500zM7.300 2.800L9 4.500 7.300 6.200 5.600 4.500zM4.500 5.600l1.700 1.700L4.500 9 2.800 7.300z"/></svg>
<div class="t" style="left:1038px;top:694px;font-size:8.500px;color:#a996d0;letter-spacing:0">2</div>

<!-- right panel -->
<div class="a" style="left:1097px;top:85px;width:183px;height:635px;background:#2c2c2c"></div>
<div class="t b" style="left:1109px;top:93px">Design</div>
<div class="t g" style="left:1149px;top:93px">Prototype</div>
<div class="t g" style="left:1201px;top:93px">Inspect</div>
<div class="div" style="top:116px"></div>
<div class="t b" style="left:1109px;top:127px">Background</div>
<div class="a" style="left:1109.500px;top:152px;width:12px;height:12.500px;background:#484848"></div>
<div class="t" style="left:1128px;top:151px">484848</div>
<div class="t" style="left:1183px;top:151px">100%</div>
<svg class="a" style="left:1257px;top:155px" width="10" height="7" viewBox="0 0 11 8" fill="none" stroke="#eee"><path d="M.5 4C2 1.500 3.500.7 5.500.7S9 1.500 10.500 4C9 6.500 7.500 7.300 5.500 7.300S2 6.500.5 4z"/><circle cx="5.500" cy="4" r="1.500" fill="#eee"/></svg>
<div class="div" style="top:177px"></div>
<div class="t b" style="left:1109px;top:189px">Local styles</div>
<svg class="a" style="left:1257px;top:192px" width="9" height="9" viewBox="0 0 9 9" stroke="#ddd"><path d="M4.500 0v9M0 4.500h9"/></svg>
<div class="t g" style="left:1109px;top:219px;color:#bdbdbd">Color styles</div>
<div class="arr" style="left:1115px;top:249px"></div><div class="t" style="left:1128px;top:244px">Color-Secondary</div>
<div class="arr" style="left:1115px;top:275px"></div><div class="t" style="left:1128px;top:270px">Color-Primary</div>
<div class="arr" style="left:1115px;top:301px"></div><div class="t" style="left:1128px;top:296px">Color-Neutral</div>
<div class="arr" style="left:1115px;top:327px"></div><div class="t" style="left:1128px;top:322px">color-Neutral-Variant</div>
<div class="arr" style="left:1115px;top:353px"></div><div class="t" style="left:1128px;top:348px">Color-Interface</div>
<div class="t g" style="left:1109px;top:385px;color:#bdbdbd">Effect styles</div>
<svg class="a" style="left:1111px;top:411px" width="13" height="13" viewBox="0 0 13 13" fill="none" stroke="#eee"><circle cx="6.500" cy="6.500" r="5.500"/><path d="M9 1.500a5.500 5.500 0 010 10" stroke-width="1.500"/></svg>
<div class="t" style="left:1128px;top:410.500px">Drop Shadow</div>
<div class="t g" style="left:1109px;top:448px;color:#bdbdbd">Grid styles</div>
<div class="a" style="left:1110px;top:474px;width:2.500px;height:12px;background:#f0f0f0;box-shadow:5px 0 #f0f0f0,10px 0 #f0f0f0"></div>
<div class="t" style="left:1128px;top:473px">phone 8pt grid</div>
<div class="div" style="top:499px"></div>
<div class="t b" style="left:1109px;top:511px;font-weight:normal;color:#e0e0e0">Export</div>
<svg class="a" style="left:1257px;top:514px" width="9" height="9" viewBox="0 0 9 9" stroke="#bbb"><path d="M4.500 0v9M0 4.500h9"/></svg>
<div class="div" style="top:536px"></div>
<div class="t b" style="left:1109px;top:548px">Plugin</div>
<div class="a" style="left:1108px;top:578.500px;width:15px;height:15px;border-radius:8px;background:#0c0c14"></div>
<div class="a" style="left:1112px;top:581px;width:4px;height:4px;border-radius:2px;background:#9056e0"></div>
<div class="a" style="left:1117px;top:582px;width:4px;height:4px;border-radius:2px;background:#e06a78"></div>
<div class="a" style="left:1115px;top:587px;width:5px;height:5px;border-radius:3px;background:#38c8b0"></div>
<div class="a" style="left:1111px;top:586px;width:3px;height:3px;border-radius:2px;background:#4a70d0"></div>
<div class="t" style="left:1128px;top:579px">Animations</div>
<div class="a" style="left:1257px;top:585px;width:9px;height:1.500px;background:#ddd"></div>
<div class="t g" style="left:1109px;top:606px">This page has animations</div>
<div class="a" style="left:1111px;top:643px;width:11px;height:10px;background:#d01c9a;border-radius:1px;color:#fff;font-size:7px;line-height:10px;text-align:center;font-weight:bold">B</div>
<div class="a" style="left:1110.500px;top:642px;width:1px;height:12px;background:#d01c9a"></div>
<div class="t" style="left:1128px;top:641px">DesignDoc</div>
<div class="a" style="left:1257px;top:648px;width:9px;height:1px;background:#ccc"></div>
<div class="a" style="left:1235px;top:675px;width:27px;height:27px;border-radius:14px;background:#212121;color:#ccc;font-size:12px;line-height:27px;text-align:center">?</div>
<div class="t" style="left:1230px;top:697px;font-size:14.500px;line-height:17px;height:17px;color:#bdbdbd;letter-spacing:-.2px">ûdemy</div>
</div>
</body></html>
